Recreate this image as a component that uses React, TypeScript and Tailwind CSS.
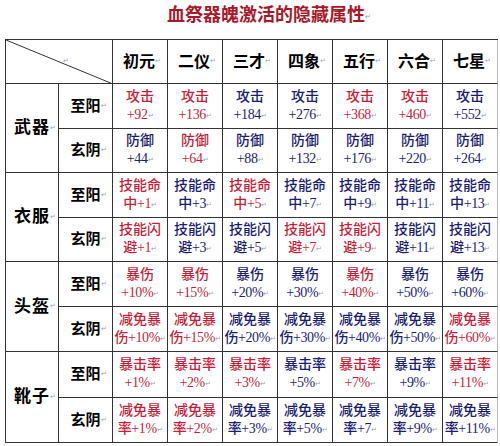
import React from 'react';

type Cell = { a: string; b: string; red: boolean };

const HEADERS = ['初元', '二仪', '三才', '四象', '五行', '六合', '七星'];

const mk = (a: string, vals: string[], reds: number[]): Cell[] =>
  vals.map((b, i) => ({ a, b, red: reds[i] === 1 }));

const GROUPS: { name: string; rows: { label: string; cells: Cell[]; h: string }[] }[] = [
  {
    name: '武器',
    rows: [
      { label: '至阳', h: 'h-[45px]', cells: mk('攻击', ['+92', '+136', '+184', '+276', '+368', '+460', '+552'], [1, 1, 0, 0, 1, 1, 0]) },
      { label: '玄阴', h: 'h-[44px]', cells: mk('防御', ['+44', '+64', '+88', '+132', '+176', '+220', '+264'], [0, 1, 0, 0, 0, 0, 0]) },
    ],
  },
  {
    name: '衣服',
    rows: [
      { label: '至阳', h: 'h-[45px]', cells: mk('技能命', ['中+1', '中+3', '中+5', '中+7', '中+9', '中+11', '中+13'], [1, 0, 1, 0, 0, 0, 0]) },
      { label: '玄阴', h: 'h-[44px]', cells: mk('技能闪', ['避+1', '避+3', '避+5', '避+7', '避+9', '避+11', '避+13'], [1, 0, 0, 1, 1, 0, 0]) },
    ],
  },
  {
    name: '头盔',
    rows: [
      { label: '至阳', h: 'h-[45px]', cells: mk('暴伤', ['+10%', '+15%', '+20%', '+30%', '+40%', '+50%', '+60%'], [1, 1, 0, 0, 1, 0, 0]) },
      { label: '玄阴', h: 'h-[45px]', cells: mk('减免暴', ['伤+10%', '伤+15%', '伤+20%', '伤+30%', '伤+40%', '伤+50%', '伤+60%'], [1, 1, 0, 0, 0, 0, 1]) },
    ],
  },
  {
    name: '靴子',
    rows: [
      { label: '至阳', h: 'h-[46px]', cells: mk('暴击率', ['+1%', '+2%', '+3%', '+5%', '+7%', '+9%', '+11%'], [1, 1, 1, 0, 1, 0, 1]) },
      { label: '玄阴', h: 'h-[45px]', cells: mk('减免暴', ['率+1%', '率+2%', '率+3%', '率+5%', '率+7', '率+9%', '率+11%'], [1, 1, 0, 0, 0, 0, 0]) },
    ],
  },
];

const Mark = () => <span className="text-[7px] text-gray-400 font-normal align-middle">↵</span>;

export default function App() {
  return (
    <div
      className="w-[500px] h-[446px] bg-white overflow-hidden"
      style={{ fontFamily: '"Liberation Serif", "Noto Sans CJK SC", serif' }}
    >
      <div className="h-[39px] pl-[167px] pt-[4px] text-[18px] leading-[22px] font-bold text-[#a8182a] whitespace-nowrap">
        血祭器魄激活的隐藏属性<Mark />
      </div>

      <div className="ml-[5px] w-[493px] border-l border-t border-[#333] grid grid-cols-[53px_54px_repeat(7,55px)]">
        {/* header row */}
        <div className="col-span-2 h-[44px] border-r border-b border-[#333] relative">
          <svg className="absolute inset-0" width="107" height="44" viewBox="0 0 107 44">
            <line x1="0" y1="0" x2="107" y2="44" stroke="#333" strokeWidth="1" />
          </svg>
          <span className="absolute left-[57px] top-[16px] text-[7px] text-gray-400">↵</span>
        </div>
        {HEADERS.map((h, i) => (
          <div
            key={h}
            className={`h-[44px] border-b flex items-center justify-center pl-[4px] text-[16px] font-bold text-black whitespace-nowrap ${
              i === 6 ? 'border-r border-r-[#bbb] border-b-[#333]' : 'border-r border-[#333]'
            }`}
          >
            {h}
            <Mark />
          </div>
        ))}

        {GROUPS.map((g) => (
          <React.Fragment key={g.name}>
            <div className="row-span-2 border-r border-b border-[#333] flex items-center pl-[8px] text-[17px] font-bold text-black tracking-[1px] whitespace-nowrap">
              {g.name}
              <Mark />
            </div>
            {g.rows.map((r, ri) => (
              <React.Fragment key={r.label}>
                <div
                  className={`${r.h} border-r border-b border-[#333] flex items-center justify-center pl-[6px] text-[15px] font-bold text-black whitespace-nowrap`}
                  style={ri === 0 ? undefined : { gridColumnStart: 2 }}
                >
                  {r.label}
                  <Mark />
                </div>
                {r.cells.map((c, ci) => (
                  <div
                    key={ci}
                    className={`${r.h} border-b flex flex-col items-center justify-center text-[14px] leading-[18px] font-medium ${
                      c.red ? 'text-[#c41f3a]' : 'text-[#1c1d6e]'
                    } ${ci === 6 ? 'border-r border-r-[#bbb] border-b-[#333]' : 'border-r border-[#333]'}`}
                  >
                    <div className="whitespace-nowrap">{c.a}</div>
                    <div className="whitespace-nowrap tracking-[-0.4px]">
                      {c.b}
                      <Mark />
                    </div>
                  </div>
                ))}
              </React.Fragment>
            ))}
          </React.Fragment>
        ))}
      </div>
    </div>
  );
}
